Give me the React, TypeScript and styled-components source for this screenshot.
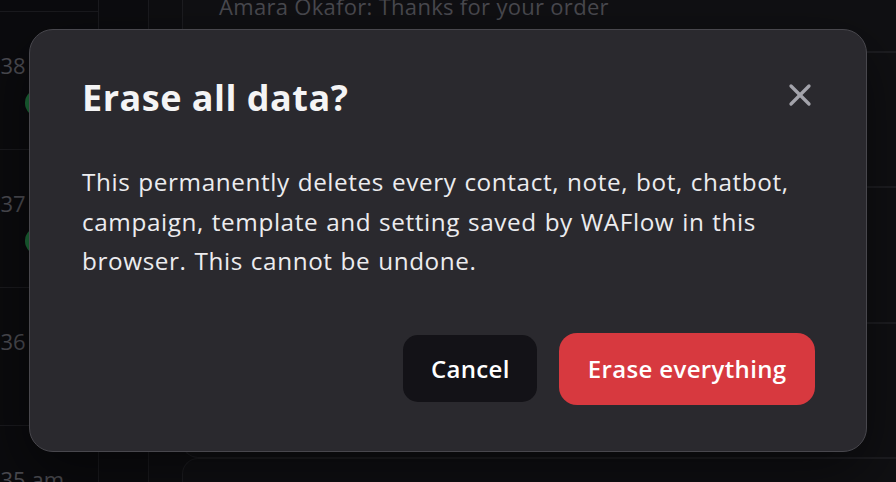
import styled, { createGlobalStyle } from "styled-components";
import { X } from "lucide-react";

const GlobalStyle = createGlobalStyle`
  html, body {
    margin: 0;
    padding: 0;
    background: #0d0d10;
  }
  body {
    font-family: "Open Sans", "Noto Sans", sans-serif;
  }
  * {
    box-sizing: border-box;
  }
`;

const Screen = styled.div`
  position: relative;
  width: 100vw;
  height: 100vh;
  overflow: hidden;
  background: #0d0d10;
`;

const Backdrop = styled.div`
  display: flex;
  height: 100%;
`;

const TimeColumn = styled.div`
  width: 99px;
  flex-shrink: 0;
  border-right: 1px solid #1b1b1f;
  background: #0b0b0e;
`;

const TimeList = styled.div`
  margin-top: -126px;
`;

const TimeRow = styled.div`
  height: 138px;
  border-bottom: 1px solid #1a1a1e;
  display: flex;
  flex-direction: column;
  align-items: flex-end;
  padding: 40px 34px 0 0;
  overflow: hidden;
`;

const TimeText = styled.span`
  font-size: 22px;
  line-height: 26px;
  color: #4c4c52;
  white-space: nowrap;
`;

const UnreadDot = styled.span`
  width: 28px;
  height: 28px;
  border-radius: 50%;
  background: #1c6b39;
  margin-top: 11px;
  align-self: flex-start;
  margin-left: 25px;
`;

const Gutter = styled.div`
  width: 50px;
  flex-shrink: 0;
  border-right: 1px solid #1b1b1f;
  background: #0c0c0f;
`;

const ThreadColumn = styled.div`
  flex: 1;
  padding-left: 33px;
  background: #0e0e11;
`;

const ThreadList = styled.div`
  margin-top: -84px;
  display: flex;
  flex-direction: column;
`;

const ThreadCard = styled.div`
  height: 135.5px;
  border: 1px solid #1d1d21;
  border-right: none;
  border-radius: 16px 0 0 16px;
  background: #101013;
  display: flex;
  align-items: flex-end;
  padding: 0 0 30px 36px;
`;

const Preview = styled.span`
  font-size: 22px;
  color: #4a4a50;
  white-space: nowrap;
  letter-spacing: 0.3px;
`;

const Overlay = styled.div`
  position: absolute;
  inset: 0;
  display: flex;
  justify-content: center;
  align-items: flex-start;
  padding-top: 29px;
`;

const Dialog = styled.div`
  width: 838px;
  background: #2a292e;
  border: 1.5px solid #48474d;
  border-radius: 24px;
  padding: 44px 51px 46px 52px;
  box-shadow: 0 20px 60px rgba(0, 0, 0, 0.5);
`;

const Header = styled.div`
  display: flex;
  justify-content: space-between;
  align-items: flex-start;
`;

const Title = styled.h2`
  margin: 0;
  font-size: 36px;
  line-height: 48px;
  font-weight: 700;
  color: #f4f4f5;
  letter-spacing: 0.5px;
`;

const CloseButton = styled.button`
  width: 36px;
  height: 36px;
  margin: 3px -3px 0 0;
  padding: 0;
  border: none;
  background: transparent;
  color: #a3a3ab;
  display: flex;
  align-items: center;
  justify-content: center;
  cursor: pointer;
`;

const Message = styled.p`
  margin: 40px -24px 0 0;
  font-size: 24.3px;
  line-height: 39.5px;
  color: #ececef;
  letter-spacing: 0.6px;
  word-spacing: 1px;
`;

const Actions = styled.div`
  margin-top: 52px;
  display: flex;
  justify-content: flex-end;
  align-items: center;
  gap: 22px;
`;

const ActionButton = styled.button<{ $danger?: boolean }>`
  height: ${(p) => (p.$danger ? "72px" : "67px")};
  padding: 0 ${(p) => (p.$danger ? "28.5px" : "27.5px")};
  border: none;
  border-radius: ${(p) => (p.$danger ? "18px" : "15px")};
  background: ${(p) => (p.$danger ? "#d7393f" : "#131217")};
  color: #ffffff;
  font-family: inherit;
  font-size: 24px;
  font-weight: 600;
  letter-spacing: 0.35px;
  cursor: pointer;
`;

const times = ["10:39 am", "10:38 am", "10:37 am", "10:36 am", "10:35 am"];

export default function App() {
  return (
    <Screen>
      <GlobalStyle />
      <Backdrop>
        <TimeColumn>
          <TimeList>
            {times.map((t, i) => (
              <TimeRow key={t}>
                <TimeText>{t}</TimeText>
                {(i === 1 || i === 2) && <UnreadDot />}
              </TimeRow>
            ))}
          </TimeList>
        </TimeColumn>
        <Gutter />
        <ThreadColumn>
          <ThreadList>
            <ThreadCard>
              <Preview>Amara Okafor: Thanks for your order</Preview>
            </ThreadCard>
            <ThreadCard />
            <ThreadCard />
            <ThreadCard />
            <ThreadCard />
          </ThreadList>
        </ThreadColumn>
      </Backdrop>
      <Overlay>
        <Dialog role="dialog" aria-modal="true">
          <Header>
            <Title>Erase all data?</Title>
            <CloseButton aria-label="Close">
              <X size={36} strokeWidth={2.2} />
            </CloseButton>
          </Header>
          <Message>
            This permanently deletes every contact, note, bot, chatbot,
            campaign, template and setting saved by WAFlow in this browser.
            This cannot be undone.
          </Message>
          <Actions>
            <ActionButton>Cancel</ActionButton>
            <ActionButton $danger>Erase everything</ActionButton>
          </Actions>
        </Dialog>
      </Overlay>
    </Screen>
  );
}
